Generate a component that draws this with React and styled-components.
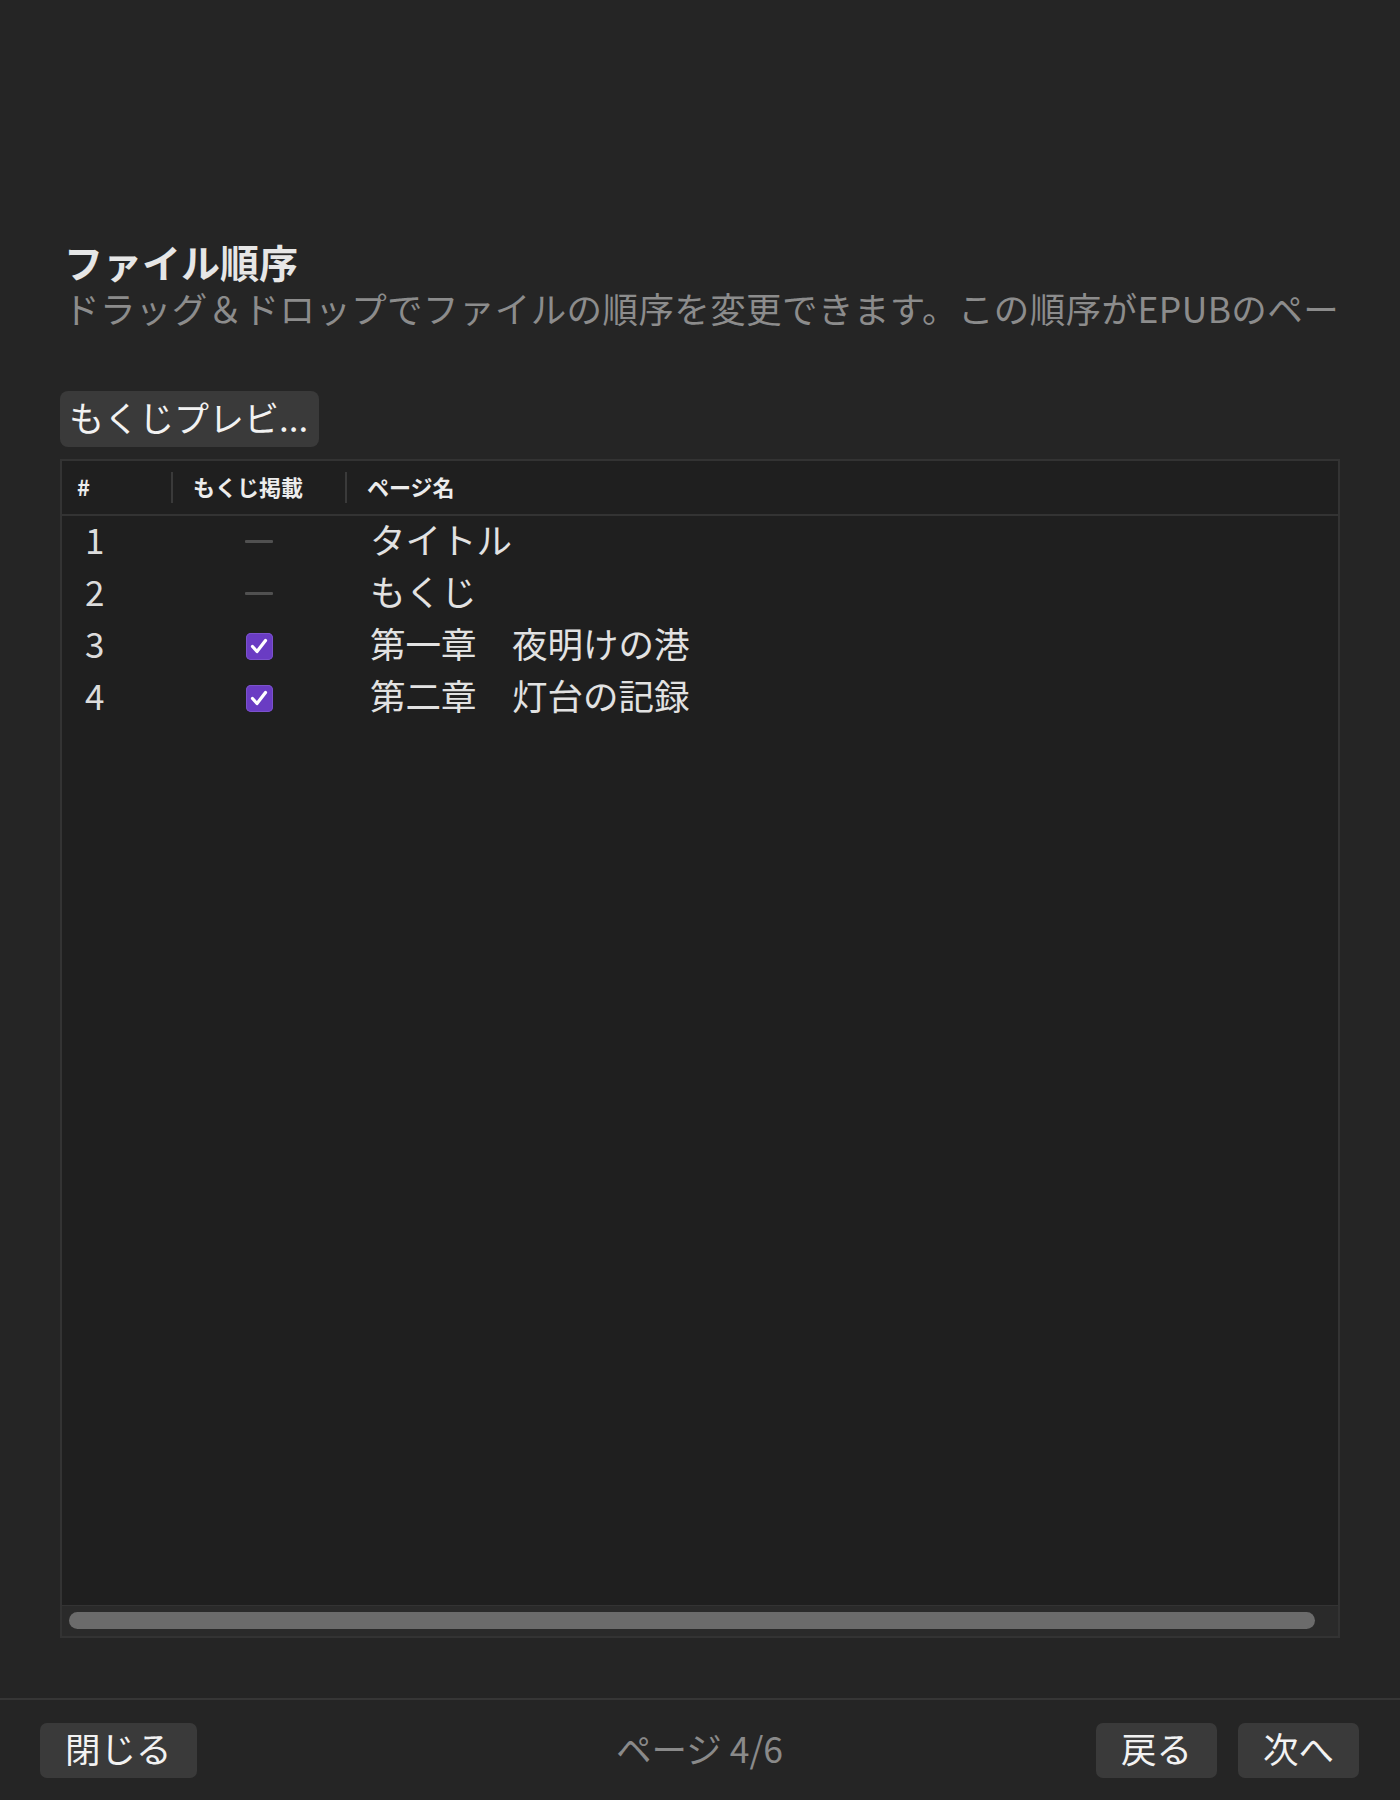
import React from "react";
import styled, { createGlobalStyle } from "styled-components";

const GlobalStyle = createGlobalStyle`
  html, body {
    margin: 0;
    padding: 0;
    background: #252525;
  }
  body {
    font-family: "Noto Sans CJK JP", "Noto Sans", sans-serif;
    color: #e4e4e4;
  }
  * { box-sizing: border-box; }
`;

const Page = styled.div`
  height: 1800px;
  display: flex;
  flex-direction: column;
  background: #252525;
`;

const Main = styled.main`
  flex: 1;
  min-height: 0;
  display: flex;
  flex-direction: column;
  padding: 236px 60px 60px;
`;

const Heading = styled.header`
  padding-left: 4px;
`;

const Title = styled.h2`
  margin: 0;
  font-size: 39px;
  line-height: 50px;
  font-weight: 700;
  color: #e6e6e6;
`;

const Subtitle = styled.p`
  margin: 0;
  font-size: 35.5px;
  line-height: 44px;
  letter-spacing: 0.4px;
  color: #8c8c8c;
  white-space: nowrap;
  overflow: hidden;
`;

const PreviewButton = styled.button`
  margin-top: 61px;
  align-self: flex-start;
  width: 259px;
  height: 56px;
  padding: 0 6px 5px 9px;
  border: none;
  border-radius: 8px;
  background: #3a3a3a;
  color: #f2f2f2;
  font-family: inherit;
  font-size: 35px;
  line-height: 51px;
  text-align: left;
  white-space: nowrap;
  overflow: hidden;
`;

const Table = styled.div`
  margin-top: 12px;
  flex: 1;
  min-height: 0;
  display: flex;
  flex-direction: column;
  border: 2px solid #333333;
  background: #1f1f1f;
`;

const columns = "109px 174px 1fr";

const HeaderRow = styled.div`
  display: grid;
  grid-template-columns: ${columns};
  align-items: center;
  height: 55px;
  border-bottom: 2px solid #333333;
`;

const HeaderCell = styled.div`
  height: 31px;
  display: flex;
  align-items: center;
  padding-left: ${(p) => p.$pad}px;
  padding-bottom: 3px;
  border-left: ${(p) => (p.$divider ? "2px solid #3a3a3a" : "none")};
  font-size: 22px;
  font-weight: 700;
  color: #ececec;
`;

const Body = styled.div`
  flex: 1;
  min-height: 0;
`;

const Row = styled.div`
  display: grid;
  grid-template-columns: ${columns};
  align-items: center;
  height: 52px;
`;

const NumCell = styled.div`
  padding-left: 23px;
  padding-bottom: 6px;
  font-size: 35px;
  line-height: 46px;
  color: #dcdcdc;
`;

const TocCell = styled.div`
  display: flex;
  justify-content: center;
  align-items: center;
  padding-left: 2px;
`;

const Dash = styled.span`
  display: block;
  width: 28px;
  height: 3px;
  margin-bottom: 2px;
  border-radius: 1px;
  background: #505050;
`;

const CheckBox = styled.span`
  display: flex;
  align-items: center;
  justify-content: center;
  width: 27px;
  height: 27px;
  border-radius: 5px;
  background: #6a3cc3;
  box-shadow: inset 0 0 0 1px #7b52cc;
`;

const NameCell = styled.div`
  padding-left: 25px;
  padding-bottom: 6px;
  font-size: 35.5px;
  line-height: 46px;
  color: #e2e2e2;
  white-space: pre;
`;

const ScrollTrack = styled.div`
  height: 31px;
  border-top: 1px solid #333333;
  background: #2a2a2a;
  display: flex;
  align-items: center;
  padding: 0 23px 1px 7px;
`;

const ScrollThumb = styled.div`
  flex: 1;
  height: 17px;
  border-radius: 9px;
  background: #6b6b6b;
`;

const Footer = styled.footer`
  display: grid;
  grid-template-columns: 1fr auto 1fr;
  align-items: center;
  border-top: 2px solid #363636;
  padding: 23px 41px 22px 40px;
`;

const FooterButton = styled.button`
  height: 55px;
  padding: 0 25px 5px;
  border: none;
  border-radius: 7px;
  background: #3a3a3a;
  color: #f2f2f2;
  font-family: inherit;
  font-size: 35.5px;
  line-height: 50px;
`;

const Left = styled.div`
  justify-self: start;
`;

const PageLabel = styled.div`
  font-size: 35.5px;
  line-height: 50px;
  padding-bottom: 5px;
  color: #8a8a8a;
`;

const Right = styled.div`
  justify-self: end;
  display: flex;
  gap: 21px;
`;

const Check = () => (
  <svg width="22" height="22" viewBox="0 0 22 22" fill="none">
    <path
      d="M4.5 11.5 L9 16.5 L17.5 5.5"
      stroke="#ffffff"
      strokeWidth="3.2"
      strokeLinecap="round"
      strokeLinejoin="round"
    />
  </svg>
);

const rows = [
  { n: 1, toc: null, name: "タイトル" },
  { n: 2, toc: null, name: "もくじ" },
  { n: 3, toc: true, name: "第一章　夜明けの港" },
  { n: 4, toc: true, name: "第二章　灯台の記録" },
];

export default function App() {
  return (
    <>
      <GlobalStyle />
      <Page>
        <Main>
          <Heading>
            <Title>ファイル順序</Title>
            <Subtitle>
              ドラッグ＆ドロップでファイルの順序を変更できます。この順序がEPUBのページ順になります。
            </Subtitle>
          </Heading>
          <PreviewButton title="もくじプレビュー">もくじプレビ...</PreviewButton>
          <Table>
            <HeaderRow>
              <HeaderCell $pad={15}>#</HeaderCell>
              <HeaderCell $pad={20} $divider>
                もくじ掲載
              </HeaderCell>
              <HeaderCell $pad={20} $divider>
                ページ名
              </HeaderCell>
            </HeaderRow>
            <Body>
              {rows.map((r) => (
                <Row key={r.n}>
                  <NumCell>{r.n}</NumCell>
                  <TocCell>
                    {r.toc ? (
                      <CheckBox>
                        <Check />
                      </CheckBox>
                    ) : (
                      <Dash />
                    )}
                  </TocCell>
                  <NameCell>{r.name}</NameCell>
                </Row>
              ))}
            </Body>
            <ScrollTrack>
              <ScrollThumb />
            </ScrollTrack>
          </Table>
        </Main>
        <Footer>
          <Left>
            <FooterButton>閉じる</FooterButton>
          </Left>
          <PageLabel>ページ 4/6</PageLabel>
          <Right>
            <FooterButton>戻る</FooterButton>
            <FooterButton>次へ</FooterButton>
          </Right>
        </Footer>
      </Page>
    </>
  );
}
